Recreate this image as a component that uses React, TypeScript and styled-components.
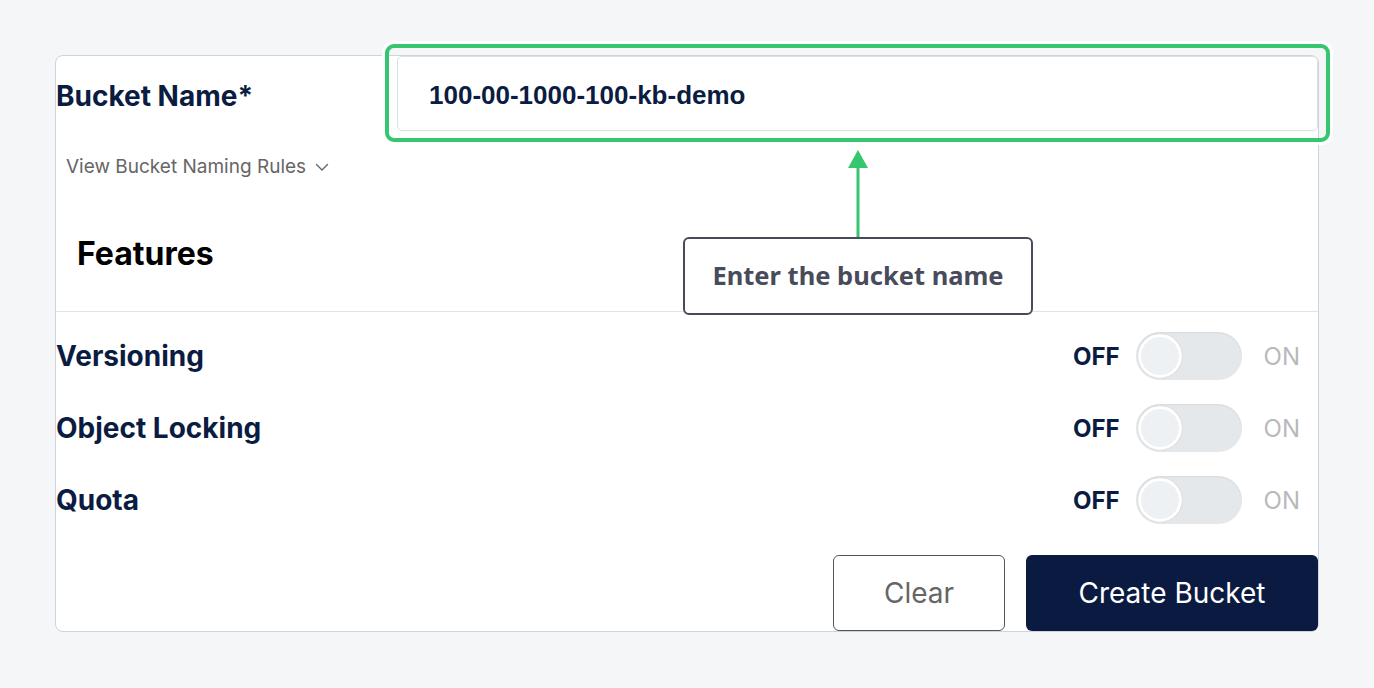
import React from "react";
import styled, { createGlobalStyle } from "styled-components";

const Navy = "#0b1c42";
const Green = "#36c66f";

const GlobalStyle = createGlobalStyle`
  html, body {
    margin: 0;
    padding: 0;
    background: #f5f6f8;
  }
  * {
    box-sizing: border-box;
  }
`;

const features = ["Versioning", "Object Locking", "Quota"];

const ChevronDown = () => (
  <svg width="16" height="16" viewBox="0 0 16 16" fill="none">
    <path d="M2.5 5.5 L8 11 L13.5 5.5" stroke="#666" strokeWidth="1.4" strokeLinecap="round" strokeLinejoin="round" />
  </svg>
);

const Toggle = () => (
  <ToggleGroup>
    <OffLabel>OFF</OffLabel>
    <Track>
      <Knob />
    </Track>
    <OnLabel>ON</OnLabel>
  </ToggleGroup>
);

const App = () => {
  return (
    <Page>
      <GlobalStyle />
      <Card>
        <TopRow>
          <LabelColumn>
            <FieldLabel>Bucket Name*</FieldLabel>
            <RulesLink>
              View Bucket Naming Rules <ChevronDown />
            </RulesLink>
          </LabelColumn>
          <NameInput value="100-00-1000-100-kb-demo" readOnly />
        </TopRow>
        <FeaturesHeader>Features</FeaturesHeader>
        <FeatureList>
          {features.map((name) => (
            <FeatureRow key={name}>
              <FeatureName>{name}</FeatureName>
              <Toggle />
            </FeatureRow>
          ))}
        </FeatureList>
        <Footer>
          <ClearButton>Clear</ClearButton>
          <CreateButton>Create Bucket</CreateButton>
        </Footer>
      </Card>

      <Highlight />
      <Arrow>
        <svg width="22" height="88" viewBox="0 0 22 88">
          <path d="M11 0 L21 18 L1 18 Z" fill={Green} />
          <rect x="9.5" y="16" width="3" height="72" fill={Green} />
        </svg>
      </Arrow>
      <Callout>Enter the bucket name</Callout>
    </Page>
  );
};

export default App;

const Page = styled.div`
  position: relative;
  width: 1374px;
  height: 688px;
  padding: 55px 0 0 55px;
  font-family: Inter, "Liberation Sans", sans-serif;
`;

const Card = styled.div`
  width: 1264px;
  height: 577px;
  display: flex;
  flex-direction: column;
  background: #ffffff;
  border: 1px solid #cdd4dd;
  border-radius: 8px;
`;

const TopRow = styled.div`
  display: flex;
  align-items: flex-start;
`;

const LabelColumn = styled.div`
  width: 341px;
  display: flex;
  flex-direction: column;
  align-items: flex-start;
  padding-top: 23px;
`;

const FieldLabel = styled.div`
  font-size: 28px;
  line-height: 34px;
  font-weight: 700;
  color: ${Navy};
`;

const RulesLink = styled.div`
  display: flex;
  align-items: center;
  gap: 8px;
  margin-top: 43px;
  padding-left: 10px;
  font-size: 19px;
  line-height: 22px;
  color: #666666;
`;

const NameInput = styled.input`
  flex: 1;
  height: 75px;
  padding: 4px 0 0 31px;
  border: 1px solid #dcdfe3;
  border-radius: 5px;
  outline: none;
  background: #ffffff;
  font-family: "Liberation Sans", Arial, sans-serif;
  font-size: 26px;
  font-weight: 700;
  color: ${Navy};
`;

const FeaturesHeader = styled.div`
  padding: 57px 21px 38px;
  border-bottom: 1px solid #e3e3e3;
  font-size: 32px;
  line-height: 38px;
  font-weight: 700;
  color: #000000;
`;

const FeatureList = styled.div`
  display: flex;
  flex-direction: column;
  padding-top: 8px;
`;

const FeatureRow = styled.div`
  height: 72px;
  display: flex;
  align-items: center;
  justify-content: space-between;
  padding-right: 18px;
`;

const FeatureName = styled.div`
  font-size: 28px;
  font-weight: 700;
  color: ${Navy};
`;

const ToggleGroup = styled.div`
  display: flex;
  align-items: center;
`;

const OffLabel = styled.span`
  font-size: 24px;
  font-weight: 700;
  color: ${Navy};
  margin-right: 16px;
`;

const OnLabel = styled.span`
  font-size: 24px;
  font-weight: 400;
  color: #b9b9b9;
  margin-left: 22px;
`;

const Track = styled.div`
  width: 106px;
  height: 48px;
  padding: 2px;
  border-radius: 24px;
  background: #e5e8ea;
  box-shadow: inset 0 1px 2px rgba(0, 0, 0, 0.06);
  display: flex;
  align-items: center;
`;

const Knob = styled.div`
  width: 44px;
  height: 44px;
  border-radius: 50%;
  background: #eef1f3;
  border: 3px solid #ffffff;
  box-shadow: 0 0 1px rgba(0, 0, 0, 0.25);
`;

const Footer = styled.div`
  display: flex;
  justify-content: flex-end;
  gap: 21px;
  margin-top: auto;
`;

const BaseButton = styled.button`
  height: 76px;
  border-radius: 6px;
  font-family: Inter, "Liberation Sans", sans-serif;
  font-size: 28px;
  font-weight: 400;
  cursor: pointer;
`;

const ClearButton = styled(BaseButton)`
  width: 172px;
  background: #ffffff;
  border: 1.5px solid #555555;
  color: #666666;
`;

const CreateButton = styled(BaseButton)`
  width: 292px;
  background: #0a1a40;
  border: none;
  color: #ffffff;
`;

const Highlight = styled.div`
  position: absolute;
  left: 385px;
  top: 44px;
  width: 945px;
  height: 98px;
  border: 4px solid ${Green};
  border-radius: 9px;
  box-shadow: 0 0 0 3px #ffffff;
  pointer-events: none;
`;

const Arrow = styled.div`
  position: absolute;
  left: 847px;
  top: 150px;
  width: 22px;
  height: 88px;
  svg {
    display: block;
  }
`;

const Callout = styled.div`
  position: absolute;
  left: 683px;
  top: 237px;
  width: 350px;
  height: 78px;
  padding-bottom: 3px;
  display: flex;
  align-items: center;
  justify-content: center;
  background: #ffffff;
  border: 2px solid #474b5a;
  border-radius: 6px;
  font-family: "Noto Sans", "Open Sans", sans-serif;
  font-size: 25.5px;
  font-weight: 700;
  color: #474b5a;
`;
